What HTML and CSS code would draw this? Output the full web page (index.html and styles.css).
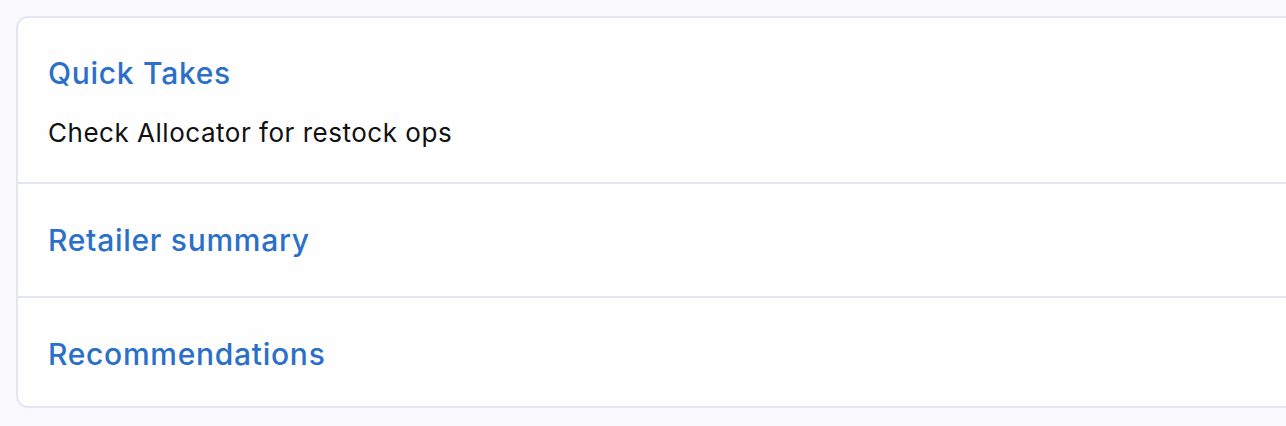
FILE: index.html
```html
<!DOCTYPE html>
<html lang="en">
<head>
<meta charset="utf-8">
<title>Quick Takes</title>
<link rel="stylesheet" href="styles.css">
</head>
<body>
<div class="page">
  <div class="card">
    <section class="section section-first">
      <h2 class="section-title">Quick Takes</h2>
      <p class="section-text">Check Allocator for restock ops</p>
    </section>
    <section class="section">
      <h2 class="section-title">Retailer summary</h2>
    </section>
    <section class="section section-last">
      <h2 class="section-title">Recommendations</h2>
    </section>
  </div>
</div>
</body>
</html>
```
FILE: styles.css
```css
html, body {
  margin: 0;
  padding: 0;
  background: #f9f9fe;
  overflow: hidden;
}
body {
  font-family: Inter, "Noto Sans", sans-serif;
}
.page {
  padding: 16px 0 0 16px;
}
.card {
  width: 1320px;
  background: #fefeff;
  border: 2px solid #e4e5f3;
  border-radius: 12px;
}
.section {
  padding: 36px 30px;
  border-top: 2px solid #e4e5f3;
}
.section-first {
  border-top: none;
  padding-top: 35px;
  padding-bottom: 33px;
}
.section-last {
  padding-bottom: 32px;
}
.section-title {
  margin: 0;
  font-size: 30px;
  line-height: 40px;
  font-weight: 500;
  letter-spacing: 0.024em;
  color: #2b70c8;
}
.section-text {
  margin: 24px 0 0;
  font-size: 26px;
  line-height: 32px;
  letter-spacing: 0.02em;
  color: #111;
}
```
